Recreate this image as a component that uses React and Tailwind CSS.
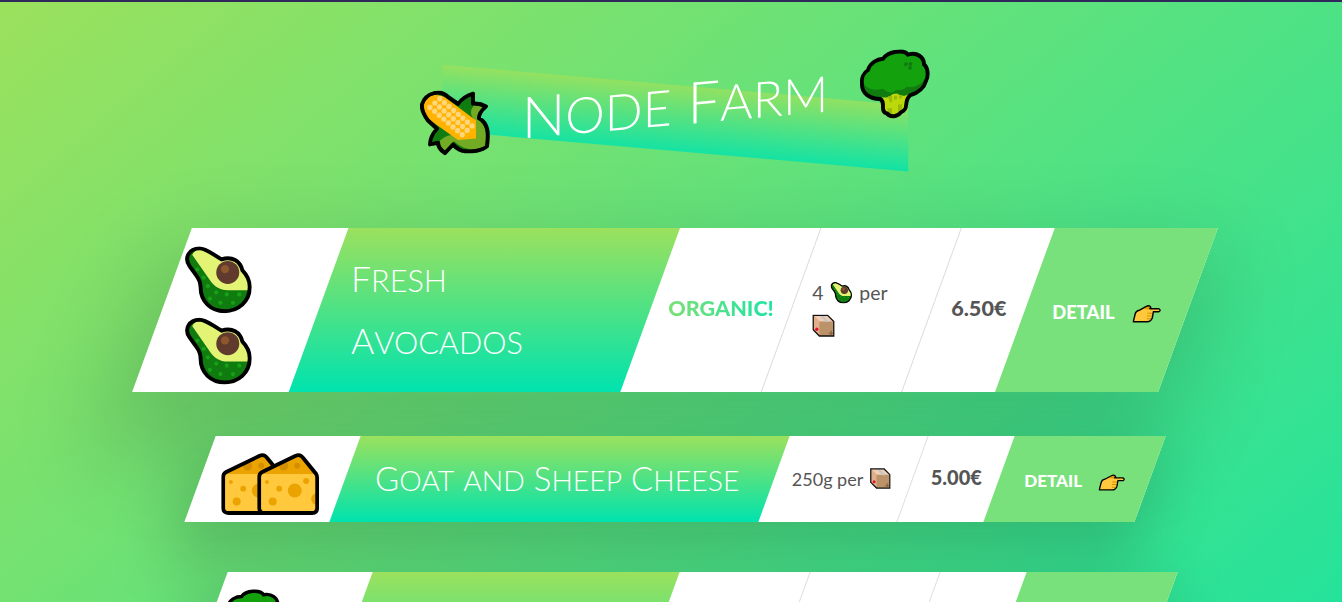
function Avocado({ className }) {
  const dots = [[12, 22], [18, 30], [22, 38], [30, 44], [40, 46], [52, 46], [24, 50], [34, 54], [46, 54]];
  return (
    <svg viewBox="0 0 64 64" className={className} role="img" aria-label="avocado">
      <path d="M14 2C20 2 24 6 35 12.5C45 9 53 14 55 23C60 28 62 33 62 39C62 53 51 62 38 62S15 53 15 39C15 34 14 32 11 28L4.5 19C-1 11 4 2 14 2Z" fill="#107c10" />
      <path d="M7 8C9 4 13 2 17 3L35 12.5C45 9 53 14 55 23C60 28 62 33 61 42H41C33 42 28 38 25 34Z" fill="#e3f475" />
      {dots.map(([x, y]) => <circle key={`${x}-${y}`} cx={x} cy={y} r="2" fill="#16a116" />)}
      <circle cx="41" cy="25" r="11" fill="#603b2d" />
      <circle cx="38.4" cy="21.8" r="4" fill="#8e562e" />
      <path d="M14 2C20 2 24 6 35 12.5C45 9 53 14 55 23C60 28 62 33 62 39C62 53 51 62 38 62S15 53 15 39C15 34 14 32 11 28L4.5 19C-1 11 4 2 14 2Z" fill="none" stroke="#000" strokeWidth="3.8" />
    </svg>
  );
}

function Cheese({ className }) {
  const outline = "M2 24C2 21.5 3 20 5 19L38 3C41 1.5 44 2 46 5L59 21C60 22.5 60 23 60 25V55Q60 60 55 60H7Q2 60 2 55Z";
  return (
    <svg viewBox="0 0 62 62" className={className} role="img" aria-label="cheese">
      <path d={outline} fill="#ffc83d" />
      <path d="M3 21L38 3C41 1.5 44 2 46 5L59 21Z" fill="#eba300" />
      <g fill="#eba300">
        <circle cx="9.7" cy="29" r="2" />
        <circle cx="22" cy="35.7" r="2.9" />
        <circle cx="15.5" cy="48.5" r="4" />
        <circle cx="37.6" cy="37.6" r="7" />
        <circle cx="49" cy="28" r="3" />
        <path d="M60 40a6 6 0 0 0 0 12z" />
      </g>
      <circle cx="26.5" cy="13" r="4.5" fill="#d38f00" />
      <circle cx="40" cy="12.7" r="3" fill="#d38f00" />
      <path d={outline} fill="none" stroke="#000" strokeWidth="3.8" />
    </svg>
  );
}

function Broccoli({ className }) {
  const outline = "M23 8C28 1 44 0 48 6C57 4 64 10 64 17C69 22 68 31 66 34C64 41 58 45 50 47C46 50 47 52 46 57C46 60 44 62 41 63C37 67.500 31 67.500 27 63C24 62 23 60 23 57C23 52 23 50 20 48C10 47 2 41 2 32C1 25 4 20 8 18C10 11 17 8 23 8Z";
  return (
    <svg viewBox="0 0 70 69" className={className} role="img" aria-label="broccoli">
      <path d={outline} fill="#107c10" />
      <path d="M23 8C28 1 44 0 48 6C57 4 64 10 64 17C69 24 67 29 64 32C61 38 52 40 47 38C41 43 38 39 35 41C32 44 27 42 23 38C14 40 5 36 3 29C2 24 4 20 8 18C10 11 17 8 23 8Z" fill="#13a10e" />
      <path d="M22 46C27 48 30 46 33 44H37C40 46 43 48 48 46C46 50 47 52 46 57C46 60 44 62 41 63C37 67.500 31 67.500 27 63C24 62 23 60 23 57C23 52 24 50 22 46Z" fill="#bad80a" />
      <g fill="#9aba0c">
        <path d="M28 46h4v6h-2zM34 46h3v4h-3zM39 46h3v3h-3zM38 55h4v7h-4zM27 58h5v5h-3z" />
      </g>
      <g fill="#107c10">
        <circle cx="46" cy="15.5" r="2" />
        <circle cx="50.5" cy="15.5" r="2" />
        <circle cx="50" cy="19.5" r="1.9" />
      </g>
      <path d={outline} fill="none" stroke="#000" strokeWidth="3.9" />
    </svg>
  );
}

function Corn({ className }) {
  const kernels = [];
  for (let i = 0; i < 8; i += 1) {
    for (let j = 0; j < 3; j += 1) {
      kernels.push([10 + i * 4.6 + j * 4.9, 16 + i * 4.3 - j * 3.9]);
    }
  }
  const outline = "M14 2C20 1 25 4 28 7L38 15C42 10 48 7 53 6L53 16C58 16 63 18 66 20C62 23 59 27 59 31C68 37 69 46 67 60C62 64 52 64 46 63C42 63 36 59 33 55L25 63C21 60 18 57 18 52L10 53C10 47 12 43 17 38L8 29C4 23 1 17 2 12C4 6 8 3 14 2Z";
  return (
    <svg viewBox="0 0 70 66" className={className} role="img" aria-label="corn">
      <path d={outline} fill="#107c10" />
      <path d="M54 18L64 20C59 25 57 28 57 32C66 38 67 46 65 60C55 63 45 63 34 52L25 61C21 57 20 54 20 50C26 45 33 44 40 48H54V32C50 27 50 22 54 18Z" fill="#73aa24" />
      <path d="M14 4C9 4 4 9 4 14C4 22 8 27 14 32L38 51H56V33L26 8C22 5 18 4 14 4Z" fill="#ffb300" />
      {kernels.map(([x, y]) => <circle key={`${x}-${y}`} cx={x} cy={y} r="2.700" fill="#ffd679" />)}
      <path d={outline} fill="none" stroke="#000" strokeWidth="3.9" strokeLinejoin="round" />
    </svg>
  );
}

function Parcel({ className }) {
  return (
    <svg viewBox="0 0 22 22" className={className} role="img" aria-label="package">
      <path d="M1 1H15L21 7V21H7L1 15Z" fill="#bc9368" />
      <path d="M1 1H15L21 7H7Z" fill="#f0cdb3" />
      <path d="M1 1L7 7V21L1 15Z" fill="#e0b08c" />
      <path d="M7.500 1H10.500L16.500 7.500H13.500Z" fill="#c3c5c8" />
      <circle cx="4.500" cy="14.500" r="1.600" fill="#e8112d" />
      <path d="M16 18.500H20M18.500 16V20" stroke="#8a6543" strokeWidth="1.300" />
      <path d="M1 1H15L21 7V21H7L1 15Z" fill="none" stroke="#111" strokeWidth="1.300" />
    </svg>
  );
}

function PointingHand({ className }) {
  return (
    <svg viewBox="0 0 29 18" className={className} role="img" aria-label="pointing right">
      <path d="M1 17L3 9C3.500 7 5 6 7 5.500L13.500 2Q17 0 18.500 2.500L17.500 4H26.500Q29 5.500 26.500 7H21L20 13Q18.500 17 15 17Z" fill="#ffc83d" />
      <path d="M11.500 4L14.500 2Q17 1 18 2.500L16 5Z" fill="#e89b00" />
      <path d="M15 8.500H20M14.500 11.200H19.500M14.500 14H18.500" stroke="#d68f00" strokeWidth="1.100" />
      <path d="M1 17L3 9C3.500 7 5 6 7 5.500L13.500 2Q17 0 18.500 2.500L17.500 4H26.500Q29 5.500 26.500 7H21L20 13Q18.500 17 15 17Z" fill="none" stroke="#000" strokeWidth="1.400" strokeLinejoin="round" />
    </svg>
  );
}

function DisplayText({ children }) {
  const words = children.split(" ");
  return words.map((word, i) => {
    const capitalised = word[0] !== word[0].toLowerCase();
    return (
      <span key={word}>
        <span className={`inline-block text-[0.86em] uppercase ${capitalised ? "first-letter:text-[1.16em]" : ""}`}>
          {word}
        </span>
        {i < words.length - 1 ? " " : ""}
      </span>
    );
  });
}

function Card({ emoji, title, organic, quantity, price, raised, stacked }) {
  return (
    <article
      className={`flex -skew-x-[20deg] bg-white ${
        raised ? "scale-[1.08] shadow-[0_40px_80px_20px_rgba(0,0,0,0.15)]" : "shadow-[0_30px_60px_10px_rgba(0,0,0,0.17)]"
      }`}
    >
      <div className="w-[145px] shrink-0 pb-[5px] pl-[23px] pt-[15px]">
        <div className={`flex skew-x-[20deg] ${stacked ? "flex-col" : "-space-x-[26px]"}`}>
          {[0, 1].map((n) => (
            <div key={n} className="flex h-[66px] shrink-0 items-center">{emoji}</div>
          ))}
        </div>
      </div>
      <div className="flex flex-1 items-center bg-linear-to-b/srgb from-[#9be15d] to-[#00e3ae] px-[30px]">
        <h2 className={`skew-x-[20deg] font-['Lato'] text-[33px] font-light leading-[56px] text-white ${stacked ? "" : "whitespace-nowrap"}`}>
          <DisplayText>{title}</DisplayText>
        </h2>
      </div>
      {organic && (
        <div className="flex w-[131px] items-center justify-center border-r border-[#ddd] pb-1">
          <p className="skew-x-[20deg] bg-linear-to-r/srgb from-[#7de075] to-[#1ce4a5] bg-clip-text text-[20px] font-black uppercase text-transparent">
            Organic!
          </p>
        </div>
      )}
      <div className={`flex items-center border-r border-[#ddd] ${organic ? "w-[130px] px-[19px]" : "w-[139px] px-[18px]"}`}>
        <p className={`skew-x-[20deg] text-[18px] leading-[31px] ${organic ? "" : "whitespace-nowrap"}`}>{quantity}</p>
      </div>
      <div className="flex w-[86px] items-center justify-center pb-1">
        <p className="skew-x-[20deg] text-[20px] font-black">{price}</p>
      </div>
      <a href="#detail" className="flex w-[151px] items-center bg-[#79e17b] pl-[26px] pt-1">
        <span className="flex skew-x-[20deg] items-center gap-4 text-[17px] font-black uppercase text-white">
          Detail
          <PointingHand className="mt-1 h-[17px] w-[27px]" />
        </span>
      </a>
    </article>
  );
}

const stackedIcon = "size-[62px]";

export default function App() {
  return (
    <div className="min-h-screen border-t-2 border-[#30285a] font-['Lato',sans-serif] text-[#555]">
      <main className="min-h-[190vh] overflow-x-clip bg-linear-to-br/srgb from-[#9be15d] to-[#00e3ae] pl-2 pt-[50px]">
        <div className="mx-auto max-w-[950px]">
          <header className="relative">
            <div className="absolute left-1/2 top-[33px] h-[66px] w-[49%] -translate-x-1/2 skew-y-[5deg] bg-linear-to-b/srgb from-[#9be15d] to-[#00e3ae] opacity-80" />
            <h1 className="relative flex h-[102px] -skew-y-[5deg] items-center justify-center gap-8 font-['Lato'] text-[58px] font-light text-white">
              <Corn className="h-[66px] w-[70px]" />
              <span className="whitespace-nowrap"><DisplayText>Node Farm</DisplayText></span>
              <Broccoli className="h-[69px] w-[70px]" />
            </h1>
          </header>
          <div className="mt-20 flex flex-col gap-[50px]">
            <Card
              raised
              stacked
              organic
              emoji={<Avocado className={stackedIcon} />}
              title="Fresh Avocados"
              quantity={<>4 <Avocado className="mx-0.5 inline size-5 align-[-3px]" /> per <Parcel className="inline size-[21px] align-[-3px]" /></>}
              price="6.50€"
            />
            <Card
              emoji={<Cheese className={stackedIcon} />}
              title="Goat and Sheep Cheese"
              quantity={<>250g per <Parcel className="ml-0.5 inline size-[21px] align-[-3px]" /></>}
              price="5.00€"
            />
            <Card
              stacked
              organic
              emoji={<Broccoli className={stackedIcon} />}
              title="Apollo Broccoli"
              quantity={<>3 <Broccoli className="mx-0.5 inline size-5 align-[-3px]" /> per <Parcel className="inline size-[21px] align-[-3px]" /></>}
              price="5.50€"
            />
          </div>
        </div>
      </main>
    </div>
  );
}
